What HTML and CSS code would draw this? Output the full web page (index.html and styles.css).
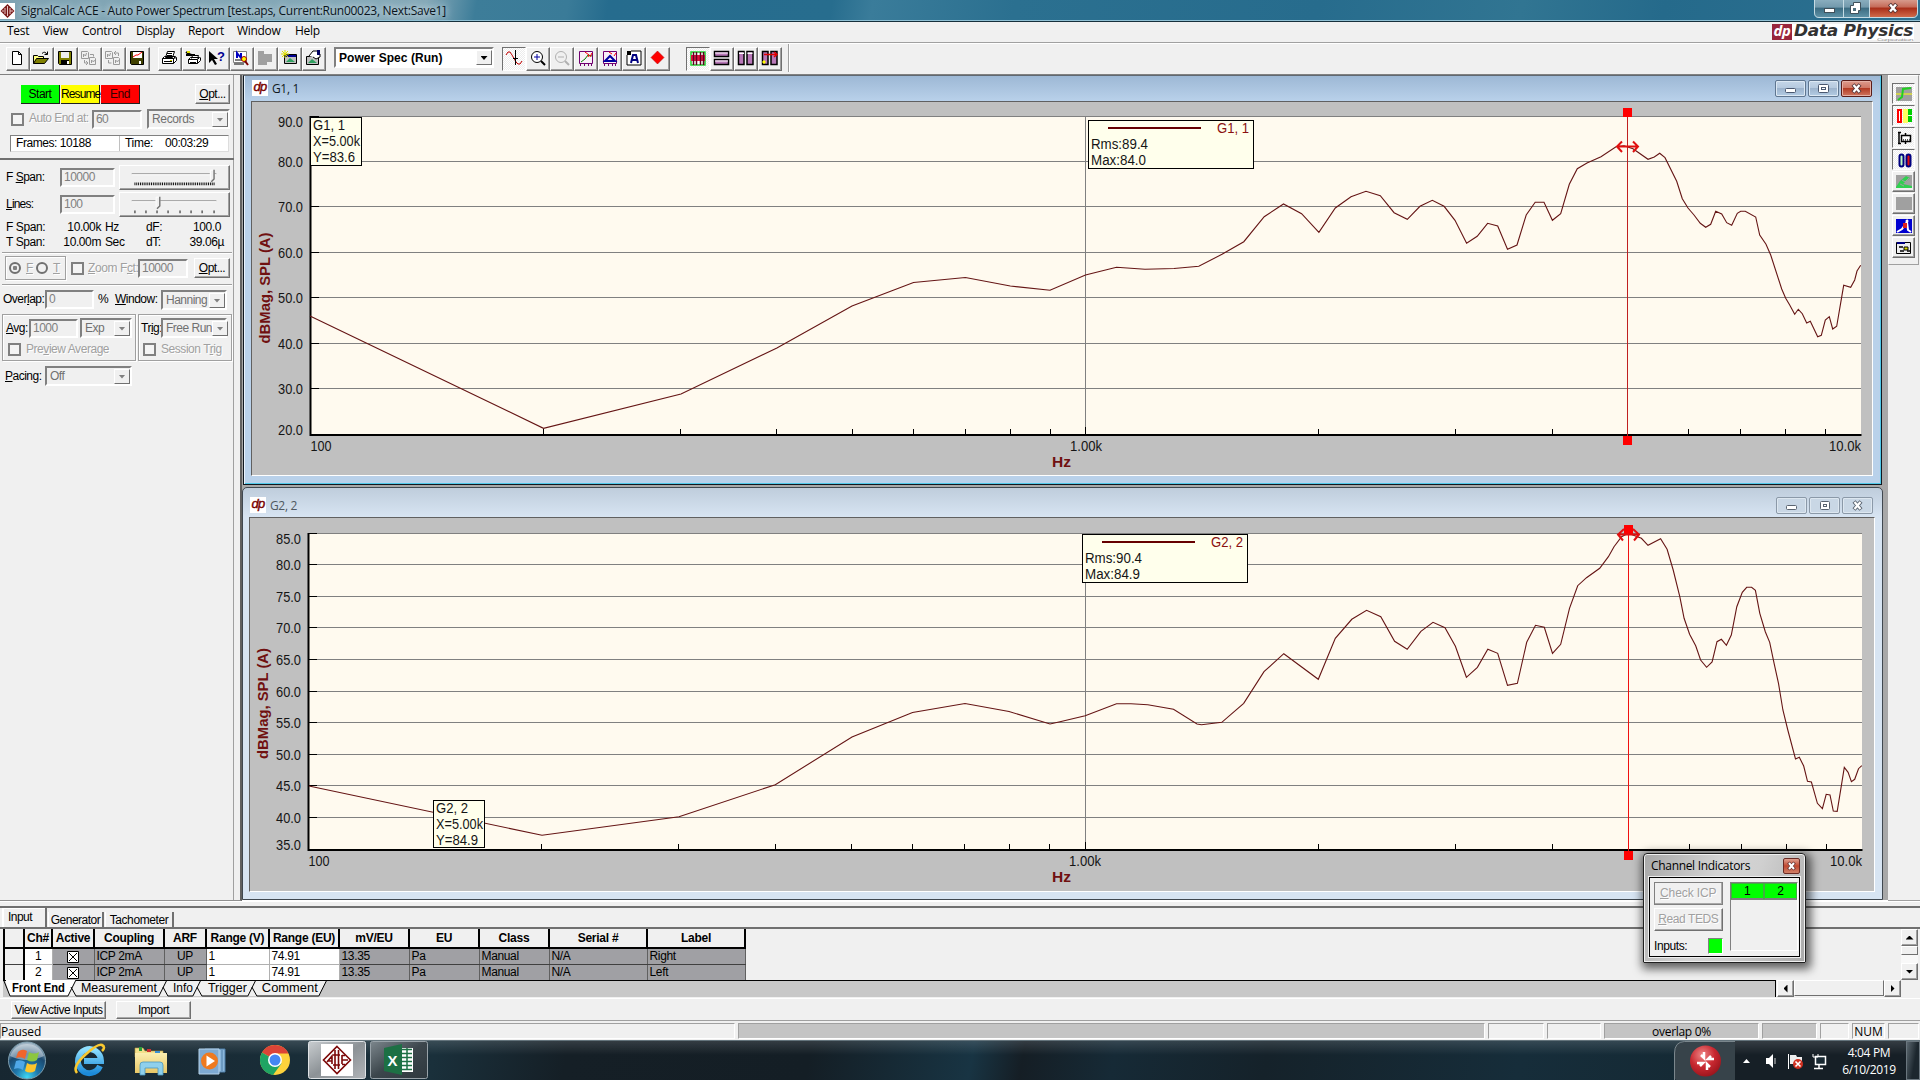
FILE: index.html
```html
<!DOCTYPE html>
<html lang="en">
<head>
<meta charset="utf-8">
<title>SignalCalc ACE - Auto Power Spectrum</title>
<link rel="stylesheet" href="styles.css">
</head>
<body>
<header class="titlebar">
  <svg class="app-icon" width="15" height="16" viewBox="0 0 15 16"><rect width="15" height="16" fill="#fff"/><path d="M7.500 1L14.500 8 7.500 15 .5 8z" fill="#7a1a1a"/><path d="M5 5v6M7.500 3v10M10 5v6M10 8h3M2 8h2" stroke="#e8c4c4" fill="none"/></svg>
  <span class="title-text">SignalCalc ACE - Auto Power Spectrum [test.aps, Current:Run00023, Next:Save1]</span>
  <div class="caption">
    <svg width="104" height="18" viewBox="0 0 104 18">
      <defs>
        <linearGradient id="capBlue" x2="0" y2="1"><stop offset="0" stop-color="#8fb2c2"/><stop offset=".48" stop-color="#7299ac"/><stop offset=".5" stop-color="#3a6a80"/><stop offset="1" stop-color="#5f93a8"/></linearGradient>
        <linearGradient id="capRed" x2="0" y2="1"><stop offset="0" stop-color="#d9a193"/><stop offset=".45" stop-color="#c56a57"/><stop offset=".5" stop-color="#a82d18"/><stop offset="1" stop-color="#cf6a4a"/></linearGradient>
      </defs>
      <path d="M.5-2V13q0 4.500 4.500 4.500H99q4.500 0 4.500-4.500V-2" fill="url(#capBlue)" stroke="#c5dbe4"/>
      <path d="M56-1V17H98q5 0 5-5V-1z" fill="url(#capRed)"/>
      <path d="M29.500 0V17M55.500 0V17" stroke="#c5dbe4"/>
      <rect x="10.500" y="8.500" width="10" height="4" fill="#fff" stroke="#40505a"/>
      <path d="M39.500 2.500h7v8h-2v3h-8v-8h3z" fill="#fff" stroke="#40505a"/><rect x="39" y="8" width="3" height="3" fill="#51707f"/>
      <path d="M75.500 4l7 8M82.500 4l-7 8" stroke="#503030" stroke-width="4"/><path d="M76 4.500l6 7M82 4.500l-6 7" stroke="#fff" stroke-width="2.400"/>
    </svg>
  </div>
</header>

<nav class="menubar">
  <span class="m-test">Test</span><span class="m-view">View</span><span class="m-control">Control</span><span class="m-display">Display</span><span class="m-report">Report</span><span class="m-window">Window</span><span>Help</span>
  <svg class="brand" width="144" height="18" viewBox="1771 23 144 18">
    <rect x="1792" y="24" width="122" height="16" fill="#fff"/>
    <rect x="1772" y="24" width="20" height="16" fill="#99253c"/>
    <text x="1773.500" y="35.500" font-size="14" font-weight="bold" font-style="italic" fill="#fff" textLength="17" lengthAdjust="spacingAndGlyphs">dp</text>
    <text class="brand-name" x="1794" y="36" textLength="119" lengthAdjust="spacingAndGlyphs">Data Physics</text>
    <text x="1877" y="40.500" font-size="4" fill="#888" textLength="36" lengthAdjust="spacingAndGlyphs">Corporation</text>
  </svg>
</nav>

<div class="toolbar">
  <div class="tool-group">
    <span class="tb"><svg viewBox="0 0 16 16"><path d="M3.500 1.500h6l3 3v10h-9z" fill="#fff" stroke="#000"/><path d="M9.500 1.500v3h3" fill="none" stroke="#000"/></svg></span>
    <span class="tb"><svg viewBox="0 0 16 16"><path d="M.5 13.500v-8h4l1 1h5v3" fill="#ffff80" stroke="#000"/><path d="M.5 13.500l3-5h12l-4 5z" fill="#808000" stroke="#000"/><path d="M9 3.500q3-3 5 1M14.500 1.500v3h-3" fill="none" stroke="#000"/></svg></span>
    <span class="tb"><svg viewBox="0 0 16 16"><path d="M1.500 1.500h13v13h-12l-1-1z" fill="#808000" stroke="#000"/><path d="M4 2h8v6h-8z" fill="#eee"/><path d="M4 10h8v5h-8z" fill="#000"/><path d="M10 11h2v3h-2z" fill="#fff"/></svg></span>
    <span class="tb"><svg viewBox="0 0 16 16" fill="none" stroke="#9a9a9a"><path d="M.5 1.500h6l1 1v6h-7zM8.500 7.500h5l1 1v6h-6zM2.500 7v-3l2 2 1-3M10.500 13v-3l2 2 1-2M9 4.500h3.500v2M3.500 10v3h3M5 11l2 2-2 2"/></svg></span>
    <span class="tb"><svg viewBox="0 0 16 16" fill="none" stroke="#9a9a9a"><path d="M.5 1.500h6l1 1v6h-7zM8.500 7.500h5l1 1v6h-6zM2.500 7v-3l2 2 1-3M10.500 13v-3l2 2 1-2M9.500 3h4v3M11 1l-2 2 2 2M3.500 10v3h3"/></svg></span>
    <span class="tb"><svg viewBox="0 0 16 16"><path d="M1.500 1.500h13v13h-12l-1-1z" fill="#404000" stroke="#000"/><path d="M4 2h9v6h-9z" fill="#fff"/><path d="M4 7l3-2 2 0 4-3" stroke="red" fill="none"/><path d="M10 11h2v3h-2z" fill="#fff"/></svg></span>
  </div>
  <div class="tool-group">
    <span class="tb"><svg viewBox="0 0 16 16"><path d="M4.500 7.500l2-6h7l-2 6zM1.500 8.500l2-2h11l-2 2M1.500 8.500h11v5h-11zM12.500 13.500l3-3v-3l-3 1" fill="#fff" stroke="#000"/><path d="M6 3.500h5M6 5.500h5M3 11.500h8" stroke="#000"/><path d="M9 10h2v1h-2z" fill="#cc0"/></svg></span>
    <span class="tb"><svg viewBox="0 0 16 16"><path d="M1 2l4 3 5 0M1 5l4 0" stroke="#000" stroke-width="2"/><path d="M6.500 8.500l1-3h6l-1 3M3.500 9.500l2-2h9l-2 2M3.500 9.500h9v4h-9zM12.500 13.500l3-3v-3" fill="#fff" stroke="#000"/><path d="M5 12.500h6" stroke="#000"/><path d="M2 1h3v2h-3z" fill="#dd0"/></svg></span>
    <span class="tb"><svg viewBox="0 0 16 16"><path d="M0 1v12l3-3 3 5 2-1-3-5h4z" fill="#000"/><text x="8" y="11" font-size="13" font-weight="bold" fill="#000090">?</text></svg></span>
    <span class="tb"><svg viewBox="0 0 16 16"><path d="M.5 1.500h13v11h-13z" fill="#fff" stroke="#808080"/><path d="M4 8V3l4 5V3" stroke="#0000c0" stroke-width="2" fill="none"/><path d="M2 10h7M1 14h10" stroke="#000"/><circle cx="11" cy="9" r="2.500" fill="#ff0" stroke="#a00"/><path d="M12 11l3 4" stroke="#800000" stroke-width="2"/></svg></span>
    <span class="tb"><svg viewBox="0 0 16 16"><path d="M1 1h6v3h8v8h-5v3H1z" fill="#a0a0a0"/></svg></span>
    <span class="tb"><svg viewBox="0 0 16 16"><path d="M3.500 4.500h12v9h-12z" fill="#c0c0c0" stroke="#000"/><path d="M4 5h11v2h-11z" fill="#000090"/><path d="M5 12l4-4 5 4z" fill="#30a060"/><path d="M4 0v8M0 4h8M1 1l6 6M7 1l-6 6" stroke="#dddd00"/></svg></span>
    <span class="tb"><svg viewBox="0 0 16 16"><path d="M1.500 6.500h12v8h-12z" fill="#c0c0c0" stroke="#000"/><path d="M3 13l4-4 5 4z" fill="#30a060"/><path d="M4 6l4-5h4l3 3v3l-4 2-3-2" fill="#fff" stroke="#000"/><path d="M12 0h3v5h-3z" fill="#000060"/></svg></span>
  </div>
  <div class="combo main-combo"><b>Power Spec (Run)</b><i class="drop"></i></div>
  <div class="tool-group g3">
    <span class="tb down"><svg viewBox="0 0 16 16"><path d="M0 5l2-3h2l2 3 4 7 2 2h2l2-3" fill="none" stroke="#c00000"/><path d="M9.500 0v15M7 8.500h5" stroke="#000"/></svg></span>
    <span class="tb"><svg viewBox="0 0 16 16"><circle cx="7" cy="7" r="5.500" fill="#fff" stroke="#000"/><path d="M4 7h6M7 4v6" stroke="#0000a0"/><path d="M11 11l4 4" stroke="#000" stroke-width="2"/></svg></span>
    <span class="tb"><svg viewBox="0 0 16 16"><circle cx="7" cy="7" r="5.500" fill="none" stroke="#b0b0b0"/><path d="M4 7h6" stroke="#b0b0b0"/><path d="M11 11l4 4" stroke="#b0b0b0" stroke-width="2"/></svg></span>
    <span class="tb"><svg viewBox="0 0 16 16"><path d="M1.500 1.500h13v12h-13zM2.500 14v2M6.500 14v2M10.500 14v2M13.500 14v2" fill="#f8f0f8" stroke="#700070"/><path d="M3 12l4-3 3-4 4 1" fill="none" stroke="#008000"/><path d="M7 2l4 3-1 2M14 3l-2 4" stroke="red" fill="none"/></svg></span>
    <span class="tb"><svg viewBox="0 0 16 16"><path d="M1.500 1.500h13v12h-13zM2.500 14v2M6.500 14v2M10.500 14v2M13.500 14v2" fill="#f8f0f8" stroke="#700070"/><path d="M3 11h10l-5-5z" fill="none" stroke="#0000a0" stroke-width="2"/><path d="M7 2l3 2M14 3l-2 3" stroke="red"/></svg></span>
    <span class="tb"><svg viewBox="0 0 16 16"><path d="M1 5l4-4h10v14H1z" fill="#fff" stroke="#000"/><path d="M1 1h4v4H1z" fill="#000"/><path d="M5 13l2-8h3l2 8M6 10h5" fill="none" stroke="#000080" stroke-width="2"/></svg></span>
    <span class="tb"><svg viewBox="0 0 16 16"><path d="M7.500 1l6.500 6.500-6.500 6.500L1 7.500z" fill="#f00" stroke="#a00" stroke-width=".5"/></svg></span>
  </div>
  <div class="tool-group g4">
    <span class="tb down"><svg viewBox="0 0 16 16"><path d="M1 2h14v13H1z" fill="#fff" stroke="#20d030" stroke-width="1.500"/><path d="M1 5h14v6H1z" fill="#e01040"/><path d="M3.500 2v13M6.500 2v13M10.500 2v13M13.500 2v13" stroke="#600020" stroke-width="1.500"/></svg></span>
    <span class="tb"><svg viewBox="0 0 16 16"><path d="M.5 1.500h14v5H.5zM.5 9.500h14v5H.5z" fill="#b878b8" stroke="#000" stroke-width="1.500"/><path d="M1 2.500h13v1H1zM1 10.500h13v1H1z" fill="#fff"/></svg></span>
    <span class="tb"><svg viewBox="0 0 16 16"><path d="M.5 1.500h5.500v13H.5zM9 1.500h6v13H9z" fill="#b878b8" stroke="#000" stroke-width="1.500"/><path d="M1 2.500h5v1.500H1zM9.500 2.500h5v1.500h-5z" fill="#fff"/></svg></span>
    <span class="tb"><svg viewBox="0 0 16 16"><path d="M.5 1.500h5.500v13H.5zM9 1.500h6v13H9z" fill="#b878b8" stroke="#000" stroke-width="1.500"/><path d="M2 4.500h13M12 2l3 2.500-3 2.500" stroke="#e00000" stroke-width="1.500" fill="none"/><path d="M2 10l2 2-2 2-2-2z" fill="#ff0"/></svg></span>
  </div>
</div>

<main class="workspace">
  <aside class="control-panel">
    <section class="run-box">
      <div class="row r-start"><span class="rb green">Start</span><span class="rb yellow">Resume</span><span class="rb red">End</span><span class="btn opt1"><u>O</u>pt...</span></div>
      <div class="row r-auto"><i class="check"></i><span class="dis lbl-auto">Auto End at:</span><span class="field w50">60</span><span class="combo c-rec">Records<i class="drop"></i></span></div>
      <div class="frames"><span class="fr">Frames: 10188</span><span class="ti">Time:</span><span>00:03:29</span></div>
    </section>
    <div class="row r-span"><span class="lb60">F <u>S</u>pan:</span><span class="field w55">10000</span>
      <svg class="slider" width="111" height="25" viewBox="0 0 111 25"><path d="M9 8.500h92" stroke="#808080"/><path d="M9 9.500h92" stroke="#fff"/><path d="M94 4h5v9l-3 3-2-3z" fill="#f0f0f0"/><path d="M94.500 15V4.500h3" stroke="#fff" fill="none"/><path d="M98.500 4v10l-3 3" stroke="#707070" fill="none" stroke-width="1.500"/><path d="M12 19.500h88" stroke="#000" stroke-width="3" stroke-dasharray="1 1"/></svg></div>
    <div class="row r-lines"><span class="lb60"><u>L</u>ines:</span><span class="field w55">100</span>
      <svg class="slider" width="111" height="25" viewBox="0 0 111 25"><path d="M9 8.500h92" stroke="#808080"/><path d="M9 9.500h92" stroke="#fff"/><path d="M35 4h5v9l-3 3-2-3z" fill="#f0f0f0"/><path d="M35.500 15V4.500h3" stroke="#fff" fill="none"/><path d="M39.500 4v10l-3 3" stroke="#707070" fill="none" stroke-width="1.500"/><path d="M12.500 19v3M24.500 19v3M36.500 19v3M48.500 19v3M61.500 19v3M73.500 19v3M85.500 19v3M98.500 19v3" stroke="#000"/></svg></div>
    <div class="info"><span>F Span:</span><span class="num">10.00k</span><span>Hz</span><span>dF:</span><span class="num">100.0</span></div>
    <div class="info info2"><span>T Span:</span><span class="num">10.00m</span><span>Sec</span><span>dT:</span><span class="num r2">39.06µ</span></div>
    <hr class="rule">
    <div class="row r-zoom"><div class="group ft"><i class="radio on"></i><span class="dis"><u>F</u></span><i class="radio"></i><span class="dis"><u>T</u></span></div><i class="check"></i><span class="dis lbl-zoom"><u>Z</u>oom F<u>c</u>t:</span><span class="field w50">10000</span><span class="btn opt2"><u>O</u>pt...</span></div>
    <hr class="rule rule2">
    <div class="row r-over"><span class="l-over">Over<u>l</u>ap:</span><span class="field w49">0</span><span class="l-pct">%</span><span class="l-win"><u>W</u>indow:</span><span class="combo c-han">Hanning<i class="drop"></i></span></div>
    <div class="row r-groups">
      <div class="group g-avg"><div class="row"><span class="l-avg"><u>A</u>vg:</span><span class="field w49">1000</span><span class="combo c-exp">Exp<i class="drop"></i></span></div><div class="row chk"><i class="check"></i><span class="dis">Pre<u>v</u>iew Average</span></div></div>
      <div class="group g-trig"><div class="row"><span class="l-trig">Tr<u>i</u>g:</span><span class="combo c-free">Free Run<i class="drop"></i></span></div><div class="row chk"><i class="check"></i><span class="dis">Session T<u>r</u>ig</span></div></div>
    </div>
    <div class="row r-pace"><span class="l-pace"><u>P</u>acing:</span><span class="combo c-off">Off<i class="drop"></i></span></div>
  </aside>

  <section class="mdi">
    <article class="win active">
      <header><i class="dp">dp</i><span class="wtitle">G1, 1</span>
        <span class="wb"><svg viewBox="0 0 29 15"><rect x="9.500" y="7.500" width="10" height="4" rx="1" fill="#fff" stroke="#4a5870"/></svg></span><span class="wb"><svg viewBox="0 0 29 15"><rect x="9.500" y="3.500" width="10" height="8" rx="1" fill="#fff" stroke="#4a5870"/><rect x="12.500" y="6.500" width="4" height="2" fill="none" stroke="#4a5870"/></svg></span><span class="wb close"><svg viewBox="0 0 29 15"><path d="M11 3.500l7 8M18 3.500l-7 8" stroke="#58383c" stroke-width="4"/><path d="M11.500 4l6 7M17.500 4l-6 7" stroke="#fff" stroke-width="2.200"/></svg></span>
      </header>
      <svg class="plot" width="1620" height="373" viewBox="252 102 1620 373">
        <rect x="310" y="116" width="1551" height="319" fill="#fffaef"/>
        <path class="grid" d="M310 116.500H1861M310 161.500H1861M310 206.500H1861M310 252.500H1861M310 297.500H1861M310 343.500H1861M310 388.500H1861M1085.500 116V434"/>
        <path class="ticks" d="M310 116.500h9M310 161.500h9M310 206.500h9M310 252.500h9M310 297.500h9M310 343.500h9M310 388.500h9M543.500 429v5M680.500 429v5M776.500 429v5M852.500 429v5M913.500 429v5M965.500 429v5M1010.500 429v5M1050.500 429v5M1085.500 427v7M1318.500 429v5M1455.500 429v5M1552.500 429v5M1688.500 429v5M1740.500 429v5M1785.500 429v5M1825.500 429v5"/>
        <path class="axis" d="M310.500 116V435H1861.500"/>
        <g class="lab"><text x="278" y="127" textLength="25" lengthAdjust="spacingAndGlyphs">90.0</text><text x="278" y="167" textLength="25" lengthAdjust="spacingAndGlyphs">80.0</text><text x="278" y="212" textLength="25" lengthAdjust="spacingAndGlyphs">70.0</text><text x="278" y="258" textLength="25" lengthAdjust="spacingAndGlyphs">60.0</text><text x="278" y="303" textLength="25" lengthAdjust="spacingAndGlyphs">50.0</text><text x="278" y="349" textLength="25" lengthAdjust="spacingAndGlyphs">40.0</text><text x="278" y="394" textLength="25" lengthAdjust="spacingAndGlyphs">30.0</text><text x="278" y="435" textLength="25" lengthAdjust="spacingAndGlyphs">20.0</text></g>
        <g class="lab"><text x="310.500" y="451" textLength="21" lengthAdjust="spacingAndGlyphs">100</text><text x="1070" y="451" textLength="32" lengthAdjust="spacingAndGlyphs">1.00k</text><text x="1829" y="451" textLength="32" lengthAdjust="spacingAndGlyphs">10.0k</text></g>
        <text class="axis-name" x="1052" y="467" textLength="19" lengthAdjust="spacingAndGlyphs">Hz</text>
        <text class="axis-name" transform="translate(269.500 343.500) rotate(-90)" textLength="111" lengthAdjust="spacingAndGlyphs">dBMag, SPL (A)</text>
        <polyline class="curve" points="310,316 543.5,428.3 681,394 776.9,348 852,306 913.5,282.5 965.4,277.5 1010.3,286 1050,290.3 1085.5,275 1116.5,267.3 1145,269.3 1174,268.5 1198.8,266.3 1222,254.3 1243.8,241.7 1264.2,216.7 1283.5,204 1301.6,213.7 1318.9,232.3 1335.3,208 1351,196.7 1366,191.3 1380.3,195.7 1394.1,212.7 1407.3,219.3 1420,206.3 1432.3,200.3 1444.1,206.3 1455,220.3 1466.6,243.3 1477.2,236.3 1487.6,223.3 1497.7,226 1507.5,249.3 1517,245 1526.2,215 1535.2,202.3 1544,202.3 1552.4,220.3 1560.7,213.7 1569.3,184.3 1577.3,168.7 1587,163 1601,156.7 1616,146.7 1624,145.7 1633,148.7 1637.3,151.7 1648,159.3 1654.3,157 1659.7,153.3 1665,157.7 1676.7,181.3 1682.3,198.7 1688,208 1694,215 1700.3,223.3 1705.7,227.3 1710.7,224.3 1715.7,211.3 1721.7,214 1726.7,222.7 1731.7,225.3 1737.3,213.3 1740.7,211.3 1745.3,211.3 1755.7,217 1759.7,235 1766,244.3 1770.7,255 1781.7,289 1785.7,298.3 1789.7,305 1794.7,314.3 1798.3,309.3 1802.3,313.7 1806.7,323 1810.3,321.3 1817.7,336.7 1821.3,335.3 1825.3,320 1829.3,316.7 1832.7,329 1836.7,326.3 1843.7,285.3 1850.7,287.3 1854.7,280 1857,271 1860.7,265.3"/>
        <path d="M1627.500 112V440" stroke="#c02020" stroke-width="1"/><rect x="1623" y="108" width="9" height="9" fill="#f00"/><rect x="1623" y="436" width="9" height="9" fill="#f00"/>
        <path class="arrows" d="M1618 146.500h19M1622 141.500l-5 5 5 5.500M1633 141.500l5 5-5 5.500"/>
        <rect class="tip" x="310.500" y="117.500" width="51" height="48"/>
        <g class="lab"><text x="313" y="130" textLength="32" lengthAdjust="spacingAndGlyphs">G1, 1</text><text x="313" y="146" textLength="47" lengthAdjust="spacingAndGlyphs">X=5.00k</text><text x="313" y="162" textLength="42" lengthAdjust="spacingAndGlyphs">Y=83.6</text></g>
        <rect class="tip" x="1088.500" y="120.500" width="165" height="48"/>
        <path d="M1108 128h93" stroke="#600" stroke-width="2"/>
        <g class="lab"><text x="1217" y="133" textLength="32" lengthAdjust="spacingAndGlyphs" fill="#8a1010">G1, 1</text><text x="1091" y="149" textLength="57" lengthAdjust="spacingAndGlyphs">Rms:89.4</text><text x="1091" y="165" textLength="55" lengthAdjust="spacingAndGlyphs">Max:84.0</text></g>
      </svg>
    </article>
    <article class="win second">
      <header><i class="dp">dp</i><span class="wtitle">G2, 2</span>
        <span class="wb"><svg viewBox="0 0 29 15"><rect x="9.500" y="7.500" width="10" height="4" rx="1" fill="#fff" stroke="#5a6470"/></svg></span><span class="wb"><svg viewBox="0 0 29 15"><rect x="10.500" y="3.500" width="9" height="8" rx="1" fill="#fff" stroke="#5a6470"/><rect x="13.500" y="6.500" width="3" height="2" fill="none" stroke="#5a6470"/></svg></span><span class="wb"><svg viewBox="0 0 29 15"><path d="M11 3.500l7 8M18 3.500l-7 8" stroke="#5a6470" stroke-width="4"/><path d="M11.500 4l6 7M17.500 4l-6 7" stroke="#fff" stroke-width="2.200"/></svg></span>
      </header>
      <svg class="plot" width="1624" height="373" viewBox="250 518 1624 373">
        <rect x="308" y="533" width="1554" height="317" fill="#fffaef"/>
        <path class="grid" d="M308 533.500H1862M308 564.500H1862M308 596.500H1862M308 627.500H1862M308 659.500H1862M308 691.500H1862M308 722.500H1862M308 754.500H1862M308 785.500H1862M308 817.500H1862M1085.500 533V849"/>
        <path class="ticks" d="M308 533.500h9M308 564.500h9M308 596.500h9M308 627.500h9M308 659.500h9M308 691.500h9M308 722.500h9M308 754.500h9M308 785.500h9M308 817.500h9M541.500 844v5M678.500 844v5M775.500 844v5M851.500 844v5M912.500 844v5M964.500 844v5M1009.500 844v5M1049.500 844v5M1085.500 842v7M1318.500 844v5M1455.500 844v5M1552.500 844v5M1689.500 844v5M1741.500 844v5M1786.500 844v5M1826.500 844v5"/>
        <path class="axis" d="M308.500 533V850H1862.500"/>
        <g class="lab"><text x="276" y="544" textLength="25" lengthAdjust="spacingAndGlyphs">85.0</text><text x="276" y="570" textLength="25" lengthAdjust="spacingAndGlyphs">80.0</text><text x="276" y="602" textLength="25" lengthAdjust="spacingAndGlyphs">75.0</text><text x="276" y="633" textLength="25" lengthAdjust="spacingAndGlyphs">70.0</text><text x="276" y="665" textLength="25" lengthAdjust="spacingAndGlyphs">65.0</text><text x="276" y="697" textLength="25" lengthAdjust="spacingAndGlyphs">60.0</text><text x="276" y="728" textLength="25" lengthAdjust="spacingAndGlyphs">55.0</text><text x="276" y="760" textLength="25" lengthAdjust="spacingAndGlyphs">50.0</text><text x="276" y="791" textLength="25" lengthAdjust="spacingAndGlyphs">45.0</text><text x="276" y="823" textLength="25" lengthAdjust="spacingAndGlyphs">40.0</text><text x="276" y="850" textLength="25" lengthAdjust="spacingAndGlyphs">35.0</text></g>
        <g class="lab"><text x="308.500" y="866" textLength="21" lengthAdjust="spacingAndGlyphs">100</text><text x="1069" y="866" textLength="32" lengthAdjust="spacingAndGlyphs">1.00k</text><text x="1830" y="866" textLength="32" lengthAdjust="spacingAndGlyphs">10.0k</text></g>
        <text class="axis-name" x="1052" y="882" textLength="19" lengthAdjust="spacingAndGlyphs">Hz</text>
        <text class="axis-name" transform="translate(268 759) rotate(-90)" textLength="111" lengthAdjust="spacingAndGlyphs">dBMag, SPL (A)</text>
        <polyline class="curve" points="309,786 542,835.3 679,816.7 775.3,784.7 852,737 912.5,712.5 965,703.5 1009,711.5 1050,724 1060,721.7 1085.2,715.7 1116.5,703.7 1131,703.7 1147.8,704.7 1173.5,709.3 1197,724 1201.5,724.7 1221.8,722.3 1243.7,703.3 1264,671.7 1283.8,653.7 1318.3,679.3 1335.3,638.3 1351.8,619.3 1366.6,610.3 1380.8,616.7 1394.6,641.3 1407.2,649.3 1420.9,631.3 1433,622.3 1445,627.7 1455.4,646.3 1466.4,677.3 1477.4,667.3 1487.8,649.3 1497.7,653.3 1507.5,685.3 1517.4,683.3 1526.7,642.3 1535.5,625.3 1544.3,627.3 1552.5,653.3 1560.7,644.3 1569.5,608.3 1577.7,585.7 1586.5,577.7 1599.7,568.3 1608.4,556.7 1614,546.7 1621.6,536.7 1628.2,533.3 1641.4,538.3 1648,545.3 1660.6,538.7 1667.1,549.3 1673.2,570 1679.8,596.7 1684.1,618.3 1689.6,634.3 1695.7,645.7 1700.6,660 1706.6,667.3 1712.1,662 1717,641.7 1721.4,639.3 1726.4,645.3 1731.3,635 1736.8,606.7 1742.3,592.3 1746.7,587.3 1751.6,587.3 1755.4,590.3 1759.8,613.3 1765.3,631.7 1769.7,642.3 1774.1,663.3 1778.5,683.3 1782.9,710 1787.8,730 1795.5,759 1799.3,757.3 1803.7,766 1807.5,781.3 1811.4,782 1817.4,803.3 1822.4,808.7 1826.2,794.3 1830,795 1833.3,811 1837.2,811.3 1844.3,767.3 1848.1,772.3 1851.4,781.7 1854.7,779.3 1858.5,768.7 1861.8,765.7"/>
        <path d="M1628.500 530V855" stroke="#f01010" stroke-width="1"/><rect x="1624" y="525" width="9" height="9" fill="#f00"/><rect x="1624" y="851" width="9" height="9" fill="#f00"/>
        <path class="arrows" d="M1619 534.500h19M1624 529l-6 5.500 5 6M1633 529l6 5.500-5 6"/>
        <rect class="tip" x="433.500" y="800.500" width="51" height="47"/>
        <g class="lab"><text x="436" y="813" textLength="32" lengthAdjust="spacingAndGlyphs">G2, 2</text><text x="436" y="829" textLength="47" lengthAdjust="spacingAndGlyphs">X=5.00k</text><text x="436" y="845" textLength="42" lengthAdjust="spacingAndGlyphs">Y=84.9</text></g>
        <rect class="tip" x="1082.500" y="534.500" width="165" height="48"/>
        <path d="M1102 542h93" stroke="#600" stroke-width="2"/>
        <g class="lab"><text x="1211" y="547" textLength="32" lengthAdjust="spacingAndGlyphs" fill="#8a1010">G2, 2</text><text x="1085" y="563" textLength="57" lengthAdjust="spacingAndGlyphs">Rms:90.4</text><text x="1085" y="579" textLength="55" lengthAdjust="spacingAndGlyphs">Max:84.9</text></g>
      </svg>
    </article>
  </section>

  <aside class="side-tools">
    <div class="side-box">
      <span class="sb down"><svg viewBox="0 0 16 16"><path d="M0 1h16v14H0z" fill="#a0a0a0"/><path d="M0 8h16" stroke="#ff0"/><path d="M2 14l4-3 1-8 8-1" stroke="#20d020" stroke-width="2" fill="none"/></svg></span>
      <span class="sb down"><svg viewBox="0 0 16 16"><path d="M2 2h3v12H2z" fill="#fff" stroke="red" stroke-width="2"/><path d="M7 1h5v14H7z" fill="#ffff60"/><path d="M14 1v14" stroke="#00d000" stroke-width="4" stroke-dasharray="6 1"/></svg></span>
      <span class="sb down"><svg viewBox="0 0 16 16"><path d="M3 2v12M2 2.500h3M2 13.500h3" stroke="#000" stroke-width="1.500"/><path d="M5.500 5.500h9v6h-9zM9.500 3v2M9.500 12v2" fill="#fff" stroke="#000" stroke-width="1.500"/><path d="M7 10h7" stroke="#555" stroke-width="2" stroke-dasharray="1 1"/></svg></span>
      <span class="sb down"><svg viewBox="0 0 16 16"><rect x="3.500" y="2.500" width="4" height="12" rx="2" fill="#c0ffc0" stroke="#000080" stroke-width="2"/><rect x="10.500" y="2.500" width="4" height="12" rx="2" fill="#e01010" stroke="#000080" stroke-width="2"/></svg></span>
      <span class="sb"><svg viewBox="0 0 16 16"><path d="M0 1h16v13H0z" fill="#a0a0a0"/><path d="M0 13l4-6 6-5 4 2-7 6 9 2v2H0z" fill="#30d050"/><path d="M6 6l3 2 4-4M4 10l4 2" stroke="#a0a0a0" fill="none"/></svg></span>
      <span class="sb"><svg viewBox="0 0 16 16"><path d="M0 1h16v13H0z" fill="#a0a0a0"/></svg></span>
      <span class="sb"><svg viewBox="0 0 16 16"><path d="M0 1h16v14H0z" fill="#0000d0"/><path d="M1 14l5-3 5-7 1 8 3 2" stroke="#fff" stroke-width="2" fill="none"/><path d="M7 5h4v5H7z" fill="#e02020"/><circle cx="11" cy="3" r="1.500" fill="#fff"/></svg></span>
      <span class="sb"><svg viewBox="0 0 16 16"><path d="M.5 2.500h14v11H.5z" fill="#eee" stroke="#000"/><path d="M1 3h8" stroke="#000080" stroke-width="2"/><path d="M3 7h4M4 11h4M11 11h3" stroke="#000" stroke-width="1.500"/><path d="M8 7h4v3H8z" fill="#dd0" stroke="#000"/></svg></span>
    </div>
  </aside>
</main>

<section class="bottom">
  <div class="tabs"><span class="tab t1">Input</span><span class="tab t2">Generator</span><span class="tab t3">Tachometer</span></div>
  <div class="sheet">
    <div class="sheet-main">
      <table>
        <colgroup><col class="k0"><col class="k1"><col class="k2"><col class="k3"><col class="k4"><col class="k5"><col class="k6"><col class="k7"><col class="k8"><col class="k9"><col class="k10"><col class="k11"></colgroup>
        <tr class="head"><th></th><th>Ch#</th><th>Active</th><th>Coupling</th><th>ARF</th><th>Range (V)</th><th>Range (EU)</th><th>mV/EU</th><th>EU</th><th>Class</th><th>Serial #</th><th>Label</th></tr>
        <tr><td class="rh"></td><td class="w c">1</td><td class="c"><svg class="xbox" viewBox="0 0 12 12"><path d="M.5.5h11v11H.5z" fill="#fff" stroke="#000"/><path d="M2 2l8 8M10 2l-8 8" stroke="#000"/></svg></td><td>ICP 2mA</td><td class="c">UP</td><td class="w">1</td><td class="w">74.91</td><td>13.35</td><td>Pa</td><td>Manual</td><td>N/A</td><td>Right</td></tr>
        <tr><td class="rh"></td><td class="w c">2</td><td class="c"><svg class="xbox" viewBox="0 0 12 12"><path d="M.5.5h11v11H.5z" fill="#fff" stroke="#000"/><path d="M2 2l8 8M10 2l-8 8" stroke="#000"/></svg></td><td>ICP 2mA</td><td class="c">UP</td><td class="w">1</td><td class="w">74.91</td><td>13.35</td><td>Pa</td><td>Manual</td><td>N/A</td><td>Left</td></tr>
      </table>
      <div class="vscroll"><i class="sbtn up"></i><i class="thumb"></i><i class="track"></i><i class="sbtn dn"></i></div>
    </div>
    <div class="sheet-foot">
      <svg class="sheet-tabs" width="1776" height="17" viewBox="0 0 1776 17">
        <path d="M3 0h1773v17H3z" fill="#c8c8c8"/><path d="M5 0h71l-8 16H10z" fill="#fff"/><path d="M76 0h251l-8 16H68z" fill="#f0f0f0"/>
        <path d="M3 .5h1773" stroke="#000"/><path d="M6 0h70" stroke="#fff" stroke-width="2"/><path d="M4 1l6 15H68l8-16M71 7l5 9H159l8-16M163 7l5 9H193l8-16M197 7l5 9H248l8-16M252 7l5 9H319l8-16" fill="none" stroke="#000"/>
        <g class="st"><text x="12" y="12" font-weight="bold" textLength="53" lengthAdjust="spacingAndGlyphs">Front End</text><text x="81" y="12" textLength="76" lengthAdjust="spacingAndGlyphs">Measurement</text><text x="173" y="12" textLength="20" lengthAdjust="spacingAndGlyphs">Info</text><text x="208" y="12" textLength="39" lengthAdjust="spacingAndGlyphs">Trigger</text><text x="262" y="12" textLength="56" lengthAdjust="spacingAndGlyphs">Comment</text></g>
      </svg>
      <div class="hscroll"><i class="sbtn lf"></i><i class="hthumb"></i><i class="sbtn rt"></i></div>
    </div>
  </div>
  <div class="bbtns"><span class="btn b1">View Active Inputs</span><span class="btn b2">Import</span></div>
</section>

<footer class="status"><span class="s s1">Paused</span><span class="s s2 g"></span><span class="s s3"></span><span class="s s4"></span><span class="s s5 g">overlap 0%</span><span class="s s6 g"></span><span class="s s7"></span><span class="s s8">NUM</span><span class="s s9"></span></footer>

<footer class="taskbar">
  <svg width="432" height="40" viewBox="0 1040 432 40">
    <defs>
      <radialGradient id="orb" cx=".5" cy=".95" r=".9"><stop offset="0" stop-color="#3fd8f4"/><stop offset=".35" stop-color="#1f78ac"/><stop offset=".7" stop-color="#1b4a70"/><stop offset="1" stop-color="#9fb4c4"/></radialGradient>
      <linearGradient id="actBtn" x2="1" y2="1"><stop offset="0" stop-color="#c9cdd0"/><stop offset=".5" stop-color="#8c9296"/><stop offset="1" stop-color="#b0b4b8"/></linearGradient>
      <linearGradient id="idleBtn" x2="1" y2="1"><stop offset="0" stop-color="#7c868c"/><stop offset=".5" stop-color="#3c464c"/><stop offset="1" stop-color="#2e383e"/></linearGradient>
      <linearGradient id="folder" x2="0" y2="1"><stop offset="0" stop-color="#fbeeb0"/><stop offset="1" stop-color="#e8c766"/></linearGradient>
      <linearGradient id="ie" x2="0" y2="1"><stop offset="0" stop-color="#8fe0ff"/><stop offset="1" stop-color="#1c8ad8"/></linearGradient>
    </defs>
    <circle cx="27" cy="1060.500" r="18.500" fill="url(#orb)" stroke="#7fa0b0"/><path d="M10 1056a18 18 0 0 1 34 0q-17 8-34 0z" fill="#fff" opacity=".4"/>
    <path d="M18 1052q4-4 9-1l-2 8q-4-3-9-1z" fill="#f0652c"/><path d="M29 1052q5 3 10 0l-2 8q-5 3-10 0z" fill="#8cc63f"/><path d="M16 1061q5-2 9 1l-2 8q-4-3-9-1z" fill="#4fa8e8"/><path d="M27 1063q5 3 10 0l-2 8q-5 3-10 0z" fill="#fdc52c"/>
    <path d="M100 1066a11.500 12 0 1 1 1-5H84" fill="none" stroke="url(#ie)" stroke-width="6"/><path d="M77 1073q-5-6 8-18t17-10 0 6" fill="none" stroke="#f8c830" stroke-width="2.600"/>
    <path d="M135 1048h8l2 3h18v6h-28z" fill="#f4e08c" stroke="#b99b40" stroke-width=".6"/><path d="M139 1047h3v4h-3z" fill="#2a9c3c"/><path d="M147 1049h4v3h-4z" fill="#d03030"/><path d="M155 1051h5v3h-5z" fill="#3a8fd0"/><path d="M135 1053h32v20h-32z" fill="url(#folder)"/><path d="M140 1075v-10q0-3 3-3h17q3 0 3 3v10h-5v-7h-13v7z" fill="#8fd0ec" stroke="#4a98c0" stroke-width=".8"/>
    <path d="M205 1049h20v23h-20z" fill="#8cb8dc" stroke="#4f7ea8"/><path d="M222 1050v21" stroke="#4f7ea8"/><path d="M199 1049h20v25h-20z" fill="#7eaad2" stroke="#b8d4ea"/><circle cx="209.500" cy="1061" r="8.500" fill="#ee7a20"/><path d="M206.500 1055.500l8.500 5.500-8.500 5.500z" fill="#fff"/>
    <circle cx="275" cy="1060" r="15" fill="#fdd33c"/><path d="M275 1060L262 1052.500A15 15 0 0 1 288.500 1053.500H275z" fill="#dc4437"/><path d="M262 1052.500A15 15 0 0 0 273 1075L281.500 1063.500 275 1060z" fill="#1fa463"/><circle cx="275" cy="1060" r="7" fill="#fff"/><circle cx="275" cy="1060" r="5.500" fill="#4587f3"/>
    <rect x="308.500" y="1041.500" width="57" height="37" rx="2" fill="url(#actBtn)" stroke="#dfe3e6"/><path d="M321 1044h32v32h-32z" fill="#fff"/><path d="M337 1046.500L350.500 1060 337 1073.500 323.500 1060z" fill="#fff" stroke="#7c0808" stroke-width="1.600"/><path d="M327 1062l5-6v8M328 1061h4M335 1050v19M338.500 1050v19M333 1055h7M333 1065h7M342 1055v9M342 1055.500h3M342 1060h6M342 1064.500h3" fill="none" stroke="#7c0808" stroke-width="1.600"/>
    <rect x="370.500" y="1041.500" width="57" height="37" rx="2" fill="url(#idleBtn)" stroke="#98a2a8"/><path d="M400 1048h13v24h-13z" fill="#fff"/><path d="M402 1049.500h10M402 1053.500h10M402 1057.500h10M402 1061.500h10M402 1065.500h10M402 1069.500h10M407 1048v22" stroke="#1d7044" stroke-width="1.500"/><path d="M384 1048l18-4v31l-18-4z" fill="#1d7044"/><text x="387.500" y="1065.500" font-size="15" font-weight="bold" fill="#fff" textLength="10" lengthAdjust="spacingAndGlyphs">X</text>
  </svg>
  <div class="tray">
    <svg width="158" height="40" viewBox="1674 1040 158 40">
      <defs><radialGradient id="redOrb" cx=".4" cy=".3" r=".8"><stop offset="0" stop-color="#f08888"/><stop offset=".5" stop-color="#c82830"/><stop offset="1" stop-color="#901018"/></radialGradient></defs>
      <path d="M1674.500 1080V1053q0-11 10-11.500H1735" fill="#39454c" stroke="#7a868c"/><path d="M1676 1080v-27q0-10 9-10.500h50v38z" fill="#37434a"/>
      <circle cx="1705.500" cy="1061" r="15.500" fill="url(#redOrb)"/><path d="M1704 1052v6l-3-3M1714 1059h-6l3-3M1707 1070v-6l3 3M1697 1063h6l-3 3" fill="none" stroke="#fff" stroke-width="2.500"/>
      <path d="M1743 1063l3.500-4 3.500 4z" fill="#fff"/>
      <path d="M1766 1058h3l4-4v14l-4-4h-3z" fill="#fff"/><path d="M1775 1058v6" stroke="#ccc"/>
      <path d="M1788.500 1054v15" stroke="#fff"/><path d="M1790 1055h6l1 2h5v7h-12z" fill="#eee"/><circle cx="1798" cy="1064" r="5" fill="#d03020"/><path d="M1795.500 1061.500l5 5M1800.500 1061.500l-5 5" stroke="#fff" stroke-width="1.600"/>
      <path d="M1815.500 1056.500h10v8h-10zM1814 1068.500h9M1819 1065v3" fill="#1a2a33" stroke="#fff" stroke-width="1.500"/><path d="M1813 1054v3h5v-3M1815.500 1057v6" stroke="#fff" fill="none"/>
    </svg>
    <div class="clock"><span>4:04 PM</span><span>6/10/2019</span></div>
    <i class="desk"></i>
  </div>
</footer>

<div class="chan">
  <header><span>Channel Indicators</span><i class="x"><svg width="15" height="14" viewBox="0 0 15 14"><path d="M4.500 3.500l6 7M10.500 3.500l-6 7" stroke="#603030" stroke-width="3.400"/><path d="M5 4l5 6M10 4l-5 6" stroke="#fff" stroke-width="2"/></svg></i></header>
  <div class="chan-body">
    <div class="chan-left"><span class="btn cb1"><u>C</u>heck ICP</span><span class="btn cb2"><u>R</u>ead TEDS</span><div class="inp"><span>Inputs:</span><i></i></div></div>
    <div class="chan-grid"><b>1</b><b>2</b></div>
  </div>
</div>
</body>
</html>
```
FILE: styles.css
```css
*{box-sizing:border-box}
body{margin:0;width:1920px;height:1080px;overflow:hidden;background:#f0f0f0;font-family:"Liberation Sans",Arial,sans-serif;font-size:12px;color:#000;display:flex;flex-direction:column;position:relative}
i{font-style:normal}
span{white-space:nowrap}
svg{display:block;flex:none}

/* title and menu */
.titlebar{height:22px;display:flex;align-items:flex-start;flex:none;border-bottom:1px solid #16303c;box-shadow:inset 0 -1px #8fc0d4;background:linear-gradient(100deg,#7fa3b3 0,#86a9b8 420px,#3d7d99 470px,#3a7b98 560px,#266c8e 600px,#276d8e 820px,#3a7c9a 860px,#2b7090 1000px,#276c8d 1300px,#317592 1500px,#256a8b 1640px,#2d7191 1920px)}
.app-icon{margin-top:3px}
.title-text{margin:2px 0 0 6px;font:12px/17px "Open Sans","Noto Sans",sans-serif;letter-spacing:-.27px;color:#0a141c;text-shadow:0 0 6px #d5e4ea,0 0 8px #c5d8e0}
.caption{margin-left:auto;margin-right:2px}
.menubar{height:21px;flex:none;display:flex;align-items:center;padding-left:7px;border-bottom:1px solid #a0a0a0;font:12px/18px "Open Sans","Noto Sans",sans-serif;letter-spacing:-.3px}
.menubar>span{margin-top:-3px}
.m-test{width:36px}.m-view{width:39px}.m-control{width:54px}.m-display{width:52px}.m-report{width:49px}.m-window{width:58px}
.brand{margin-left:auto;margin-right:5px;overflow:visible}
.brand-name{font:italic bold 15px "DejaVu Sans",sans-serif;fill:#333}

/* toolbar */
.toolbar{height:32px;flex:none;border-top:1px solid #fff;border-bottom:1px solid #808080;display:flex;align-items:flex-start;padding:3px 0 0 6px}
.tool-group{display:flex;margin-right:8px}
.tb{width:24px;height:24px;border:1px solid;border-color:#fff #707070 #707070 #fff;box-shadow:inset -1px -1px #a0a0a0;padding:2px}
.tb svg{width:16px;height:16px;overflow:visible}
.g3 .tb,.g4 .tb{padding-left:3px}
.down{border-color:#707070 #fff #fff #707070!important;background:repeating-conic-gradient(#fff 0 25%,#ececec 0 50%) 0 0/2px 2px;box-shadow:none!important}
.g3{margin-right:16px}
.g4{margin-right:0;padding-right:6px;height:28px;border-right:1px solid #a0a0a0;box-shadow:1px 0 #fff;margin-top:-3px;padding-top:3px}
.combo{display:flex;align-items:center;border:2px solid;border-color:#808080 #fff #fff #808080;height:20px;color:#707070;padding-left:3px}
.combo .drop{margin-left:auto;width:16px;height:15px;flex:none;background:#f0f0f0;border:1px solid;border-color:#fff #707070 #707070 #fff;display:flex}
.drop::after{content:"";margin:5px auto 0;width:7px;height:4px;background:#808080;clip-path:polygon(0 0,100% 0,50% 100%)}
.main-combo{width:160px;height:21px;background:#fff;color:#000;margin-right:8px;font-size:12px;letter-spacing:.05px}
.main-combo .drop::after{background:#000}

/* workspace */
.workspace{flex:none;height:826px;display:grid;grid-template-columns:242px 1646px 32px}
.control-panel{border-right:2px solid #606060;box-shadow:inset -6px 0 #f0f0f0,inset -7px 0 #a0a0a0;border-bottom:1px solid #909090;letter-spacing:-.5px;display:flex;flex-direction:column}
.row{display:flex;align-items:center;flex:none}
.run-box{width:234px;height:85px;border-bottom:2px solid #707070;padding-top:9px;flex:none}
.r-start{height:20px;padding-left:21px}
.rb{width:39px;height:19px;margin-right:1px;text-align:center;line-height:19px;border-right:1px solid #202020;border-bottom:1px solid #202020}
.green{background:#0f0}.yellow{background:#ff0;letter-spacing:-.9px}.red{background:#f00;color:#300}
.btn{border:1px solid;border-color:#fff #707070 #707070 #fff;box-shadow:inset -1px -1px #a8a8a8;display:block;text-align:center;height:20px;line-height:18px}
.opt1{width:35px;margin-left:54px}
.r-auto{margin-top:5px;height:20px;padding-left:11px}
.check{width:13px;height:13px;border:2px solid #808080;flex:none;background:#f4f4f4}
.dis{color:#a0a0a0;text-shadow:1px 1px #fff}
.lbl-auto{margin-left:5px;width:63px;margin-top:-2px}
.lbl-auto,.r-auto .field{letter-spacing:-.55px}
.field{height:19px;border:2px solid;border-color:#808080 #fff #fff #808080;color:#808080;padding-left:2px;line-height:15px;flex:none}
.w50{width:50px}.w55{width:55px}.w49{width:49px}
.c-rec{width:83px;margin-left:5px;letter-spacing:-.35px}
.frames{display:flex;margin:6px 0 0 10px;width:219px;height:17px;background:#fff;border:1px solid #808080;border-right-color:#ddd;border-bottom-color:#ddd;line-height:15px;padding-left:5px;letter-spacing:-.45px}
.fr{width:104px;border-right:1px solid #c0c0c0}.ti{width:40px;margin-left:5px;letter-spacing:-.3px}
.r-span{height:26px;margin-top:4px;padding-left:6px}
.r-lines{height:26px;margin-top:1px;padding-left:6px}
.r-lines .lb60{letter-spacing:-.8px}
.lb60{width:54px}
.slider{margin-left:4px;border:1px solid;border-color:#fff #707070 #707070 #fff;box-shadow:inset -1px -1px #a0a0a0}
.info{display:grid;grid-template-columns:56px 39px 41px 35px 44px;padding-left:6px;height:15px;line-height:15px;margin-top:3px;letter-spacing:-.4px}
.info2{margin-top:0}
.info span:nth-child(3){padding-left:4px}.info span:nth-child(4){padding-left:4px}
.num{text-align:right}.r2{margin-right:-3px}
.rule{width:230px;margin:2px 0 0 2px;border:0;height:2px;background:#a0a0a0;border-bottom:1px solid #fff;flex:none}
.r-zoom{height:24px;margin-top:2px;padding-left:5px}
.group{border:1px solid #a0a0a0;box-shadow:inset 1px 1px #fff,1px 1px #fff}
.ft{width:61px;height:24px;display:flex;align-items:center;padding-left:3px;margin-right:5px}
.ft .dis{width:10px;margin-left:5px}
.ft .dis+.radio{margin-left:0}
.radio{width:12px;height:12px;border:2px solid #707070;border-radius:50%;flex:none}
.radio.on{background:radial-gradient(#808080 0 2px,#f0f0f0 2.500px)}
.lbl-zoom{margin-left:4px;width:50px;letter-spacing:-.4px}
.opt2{width:36px;margin-left:6px}
.rule2{margin-top:4px}
.r-over{height:20px;margin-top:3px;padding-left:3px}
.r-over .combo{margin-top:2px}
.l-over{width:42px}.l-pct{margin-left:4px;width:17px}.l-win{width:46px}
.c-han{width:66px}
.r-groups{margin:5px 0 0 2px;gap:2px}
.g-avg{width:134px;height:47px;padding:3px 0 0 3px}
.g-trig{width:94px;height:47px;padding:3px 0 0 2px}
.l-avg{width:23px}.c-exp{width:52px;margin-left:2px}
.l-trig{width:20px}.c-free{width:66px}
.group .row{height:20px}
.group .chk{padding-left:2px;gap:5px;height:22px;letter-spacing:-.45px}
.g-avg .combo,.g-trig .combo{height:20px}
.r-pace{margin-top:5px;padding-left:5px}
.l-pace{width:40px}.c-off{width:87px}

/* child windows */
.mdi{background:#a8a8a8;display:flex;flex-direction:column;gap:2px;border-bottom:1px solid #fff}
.win{display:flex;flex-direction:column;flex:none;border:1px solid #404850}
.active{margin-left:1px;width:1639px;height:410px;background:linear-gradient(#9db8d5,#b9d1ea 25px);border-color:#606870 #101820 #101820;box-shadow:inset 1px 0 #e8f2fc,inset -1px -1px #50c8e8}
.second{width:1641px;height:413px;background:linear-gradient(#bfcddc,#d7e4f2 29px);border-radius:5px 5px 0 0}
.win header{display:flex;height:25px;flex:none;padding:4px 9px 0 8px}
.second header{height:29px;padding:9px 9px 0 7px}
.dp{width:16px;height:16px;background:#fff;color:#700;font:italic 13px/14px "Liberation Sans",sans-serif;letter-spacing:-.8px;text-align:center;-webkit-text-stroke:.4px #700}
.wtitle{margin:0 auto 0 4px;font:12px/17px "Open Sans","Noto Sans",sans-serif;letter-spacing:-.35px;color:#101820}
.second .wtitle{color:#505860}
.wb{width:31px;height:17px;border:1px solid #5f7690;border-radius:2px;margin-left:2px;background:linear-gradient(#c5d6e8,#b5c9de 48%,#9db4cd 50%,#b3cce4);box-shadow:inset 0 0 0 1px #dce8f3}
.wb svg{width:29px;height:15px}
.second .wb{border-color:#8b99a8;background:#c9d7e5;box-shadow:inset 0 0 0 1px #dde7f0}
.wb.close{border-color:#5a1c18;background:linear-gradient(#dd9c8e,#cf7563 48%,#b33c25 50%,#cf7660);box-shadow:inset 0 0 0 1px #e5b0a5}
.plot{box-sizing:content-box;margin-left:7px;background:#c0c0c0;border:1px solid;border-color:#606060 #fff #fff #606060}
.second .plot{margin-left:6px}
.grid{stroke:#808080;fill:none}
.ticks{stroke:#000;fill:none}
.axis{stroke:#000;stroke-width:2;fill:none}
.curve{fill:none;stroke:#651515;stroke-width:1.1}
.arrows{fill:none;stroke:#e01010;stroke-width:2}
.tip{fill:#ffffec;stroke:#000}
.lab{font:14px "Liberation Sans",Arial,sans-serif;fill:#151515}
.axis-name{font:bold 15px "Liberation Sans",Arial,sans-serif;fill:#701010}

/* right tool strip */
.side-tools{border-bottom:1px solid #a0a0a0;background:#f0f0f0}
.side-box{width:31px;height:190px;border:1px solid;border-color:#fff #a0a0a0 #a0a0a0 #fff;padding:7px 0 0 3px}
.sb{display:block;width:23px;height:21px;margin-bottom:1px;border:1px solid;border-color:#fff #707070 #707070 #fff;box-shadow:inset -1px -1px #a0a0a0;padding:2px 3px}
.sb svg{width:16px;height:16px}

/* bottom panel */
.bottom{flex:none;height:120px;border-top:1px solid #fff;border-bottom:1px solid #a0a0a0}
.tabs{display:flex;align-items:flex-end;height:25px;padding-left:2px;background:linear-gradient(#f0f0f0 4px,#707070 4px,#707070 6px,#f0f0f0 6px);letter-spacing:-.5px}
.tab{height:15px;border-right:2px solid #707070;border-left:1px solid #fff;text-align:center;line-height:16px}
.t1{width:45px;height:19px;line-height:18px;box-shadow:inset 1px 1px #fff;padding-right:8px}
.t2{width:56px;margin-left:1px}.t3{width:69px;margin-left:1px;letter-spacing:-.4px}
.sheet{border-top:2px solid #707070;height:71px}
.sheet-main{display:flex;height:51px}
table{border-collapse:collapse;table-layout:fixed;width:743px;height:51px;margin-left:3px;font-size:12px;letter-spacing:-.35px;border-left:2px solid #000}
th{background:#f0f0f0;height:19px;padding:0;border-right:2px solid #000;border-bottom:2px solid #000;font-size:12px;line-height:16px;letter-spacing:-.25px}
td{background:#a0a0a4;height:16px;padding:0 0 0 2px;border:1px solid #606060;line-height:14px;border-bottom-color:#404040}
td.w{background:#fff;border-color:#b0b0b0}
td.c{text-align:center;padding:0}
td.rh{background:#f0f0f0;border-right:2px solid #000}
.xbox{width:12px;height:12px;margin:2px auto 0}
.k0{width:20px}.k1{width:28px}.k2{width:42px}.k3{width:70px}.k4{width:42px}.k5{width:63px}.k6{width:70px}.k7{width:70px}.k8{width:70px}.k9{width:70px}.k10{width:98px}.k11{width:98px}
.vscroll{margin-left:auto;margin-right:2px;width:17px;display:flex;flex-direction:column;background:#f8f8f8}
.sbtn{display:flex;width:17px;height:17px;border:1px solid;border-color:#fff #707070 #707070 #fff;box-shadow:inset -1px -1px #a0a0a0;background:#f0f0f0;align-items:center;justify-content:center}
.sbtn::after{content:"";width:8px;height:4px;background:#000}
.up::after{clip-path:polygon(0 100%,50% 0,100% 100%)}
.dn::after{clip-path:polygon(0 0,100% 0,50% 100%)}
.sbtn.lf::after,.sbtn.rt::after{width:4px;height:8px}
.lf::after{clip-path:polygon(100% 0,0 50%,100% 100%)}
.rt::after{clip-path:polygon(0 0,100% 50%,0 100%)}
.thumb{height:9px;border:1px solid;border-color:#fff #707070 #707070 #fff;background:#f0f0f0}
.track{flex:1}
.sheet-foot{display:flex;height:17px}
.sheet-tabs{border-right:1px solid #000}
.st{font:13px "Liberation Sans",Arial,sans-serif}
.hscroll{display:flex;margin-left:1px}
.hthumb{width:90px;height:16px;border:1px solid;border-color:#fff #707070 #707070 #fff}
.bbtns{display:flex;padding-left:11px;gap:10px;border-top:1px solid #fff;padding-top:2px;letter-spacing:-.5px}
.bbtns .btn{height:18px;line-height:16px}
.b1{width:95px}.b2{width:75px}
.status{flex:none;height:19px;display:flex;padding-top:2px;gap:3px;font:12px/16px "Open Sans","Noto Sans",sans-serif;letter-spacing:-.3px}
.s{height:16px;border:1px solid;border-color:#a0a0a0 #fff #fff #a0a0a0;line-height:15px}
.g{background:#c4c4c4}
.s1{width:735px;letter-spacing:-.15px}.s2{width:747px}.s3{width:56px}.s4{width:54px}.s5{width:155px;text-align:center}.s6{width:55px}.s7{width:29px}.s8{width:33px;text-align:center;letter-spacing:-.1px}.s9{width:31px}

/* taskbar */
.taskbar{flex:none;height:40px;display:flex;justify-content:space-between;border-top:1px solid #64747c;background:linear-gradient(#fff2,#fff0 14px),linear-gradient(100deg,#172731 0,#1a303b 430px,#151f26 560px,#141e25 800px,#183443 960px,#151e25 1010px,#162a36 1100px,#15222a 1250px,#162d3a 1500px,#152a35 1660px,#161f26 1700px)}
.taskbar svg{margin-top:-1px}
.tray{display:flex}
.clock{width:74px;display:flex;flex-direction:column;align-items:center;color:#fff;font:12px/17px "Open Sans","Noto Sans",sans-serif;letter-spacing:-.35px;padding-top:3px}
.desk{width:14px;border:1px solid #6a767e;background:linear-gradient(100deg,#5a666e,#1c272e 60%)}

/* floating channel window */
.chan{position:absolute;left:1643px;top:853px;width:163px;height:110px;border:1px solid #202020;border-radius:4px 4px 1px 1px;background:linear-gradient(110deg,#a8a8a8,#d4d4d4 40%,#d0d0d0 60%,#aaa);box-shadow:inset 0 0 0 1px #f0f0f0,2px 3px 10px 3px rgba(0,0,0,.6);padding:0 5px;letter-spacing:-.4px}
.chan header{height:23px;display:flex;align-items:center;justify-content:space-between;padding-left:2px;font:12px "Open Sans","Noto Sans",sans-serif;letter-spacing:-.32px}
.x{width:17px;height:16px;border:1px solid #6a2a24;border-radius:2px;background:linear-gradient(#e0a090,#c04830 50%,#d08068)}
.chan-body{height:80px;border:1px solid #000;background:#f0f0f0;display:flex;padding:4px 1px 0 4px;outline:1px solid #eee}
.chan-left{width:69px;color:#a0a0a0}
.chan-left .btn{height:23px;line-height:21px;text-shadow:1px 1px #fff;font-size:12px;letter-spacing:-.1px}
.chan-left .cb1{border-color:#808080}.chan-left .cb2{margin-top:3px;letter-spacing:-.4px}
.inp{display:flex;color:#000;align-items:center;justify-content:space-between;margin-top:6px;height:17px}
.inp i{width:15px;height:16px;background:#0f0;border:1px solid #808080;border-right-color:#fff;border-bottom-color:#fff}
.chan-grid{margin-left:7px;width:69px;height:69px;border:1px solid;border-color:#808080 #fff #fff #808080;display:flex;align-items:flex-start}
.chan-grid b{flex:1;height:17px;background:#0f0;border:1px solid #40b040;border-bottom:2px solid #808080;text-align:center;font:12px/15px "Liberation Sans",sans-serif}
```
